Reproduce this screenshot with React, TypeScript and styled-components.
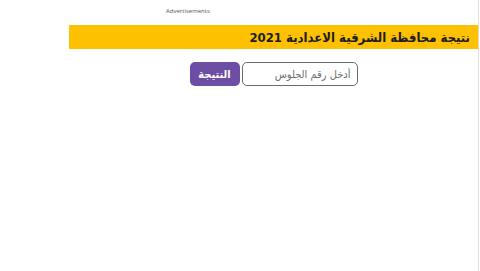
import styled, { createGlobalStyle } from 'styled-components'

const GlobalStyle = createGlobalStyle`
  html, body {
    margin: 0;
    padding: 0;
    background: #fff;
    font-family: "DejaVu Sans", "Noto Sans", sans-serif;
  }
`

const App = function () {
  return (
    <>
      <GlobalStyle />
      <Page>
        <AdLabel>Advertisements</AdLabel>
        <Main>
          <TitleBar>
            <Title>نتيجة محافظة الشرقية الاعدادية 2021</Title>
          </TitleBar>
          <SearchForm onSubmit={(event) => { event.preventDefault() }}>
            <SeatInput type="text" placeholder="أدخل رقم الجلوس" />
            <ResultButton type="submit">النتيجة</ResultButton>
          </SearchForm>
        </Main>
      </Page>
    </>
  )
}

export default App

const Page = styled.div`
  width: 479px;
  height: 271px;
  border-right: 1px solid #dedede;
  box-sizing: border-box;
`

const AdLabel = styled.div`
  padding-top: 7px;
  padding-left: 166px;
  height: 18px;
  box-sizing: border-box;
  font-family: "Open Sans", "Liberation Sans", sans-serif;
  font-size: 6px;
  color: #555;
`

const Main = styled.div`
  margin-left: 69px;
  margin-top: 7px;
  width: 409px;
  display: flex;
  flex-direction: column;
  align-items: center;
`

const TitleBar = styled.div`
  width: 100%;
  height: 24px;
  background: #fdc101;
  display: flex;
  align-items: center;
  direction: rtl;
  padding-right: 8px;
  box-sizing: border-box;
`

const Title = styled.h1`
  margin: 0;
  font-family: "DejaVu Sans Condensed", "DejaVu Sans", sans-serif;
  font-stretch: condensed;
  font-size: 13px;
  font-weight: bold;
  color: #1d1d1d;
  line-height: 1;
`

const SearchForm = styled.form`
  margin-top: 13px;
  display: flex;
  direction: rtl;
  gap: 2px;
`

const SeatInput = styled.input`
  width: 116px;
  height: 24px;
  box-sizing: border-box;
  border: 1px solid #6b6b6b;
  border-radius: 5px;
  padding: 0 6px;
  font-family: "DejaVu Sans Condensed", "DejaVu Sans", sans-serif;
  font-size: 11px;
  direction: rtl;
  &::placeholder {
    color: #6e6e6e;
  }
`

const ResultButton = styled.button`
  width: 50px;
  height: 24px;
  box-sizing: border-box;
  border: none;
  border-radius: 5px;
  background: #6c4fa4;
  color: #fff;
  font-family: "DejaVu Sans Condensed", "DejaVu Sans", sans-serif;
  font-size: 11px;
  font-weight: bold;
  cursor: pointer;
`
